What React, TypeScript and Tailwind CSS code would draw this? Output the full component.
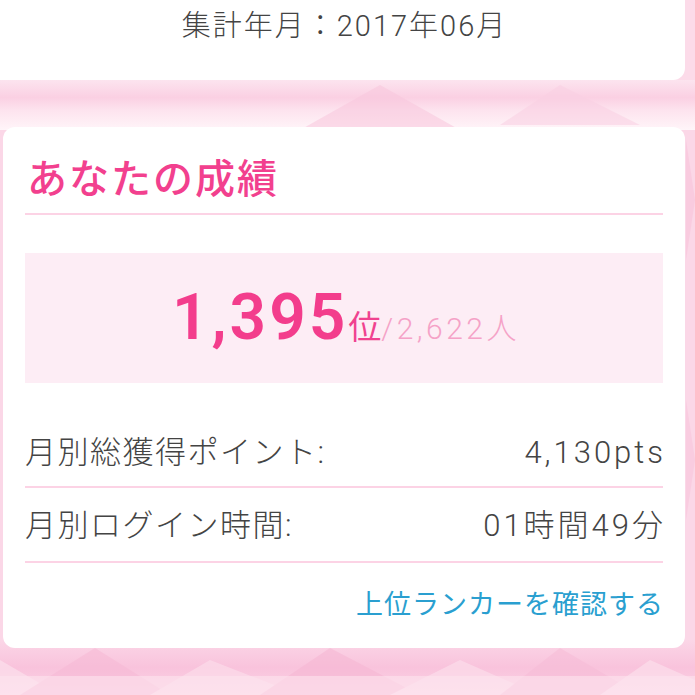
import React from "react";

const font = "font-['Roboto','Noto_Sans_CJK_JP',sans-serif]";

function Background() {
  return (
    <svg className="absolute inset-0" width="695" height="695" viewBox="0 0 695 695">
      <defs>
        <linearGradient id="band" x1="0" y1="0" x2="0" y2="1">
          <stop offset="0" stopColor="#fce4ef" />
          <stop offset="0.35" stopColor="#fbd0e3" />
          <stop offset="0.6" stopColor="#fde3ee" />
          <stop offset="1" stopColor="#fff5f9" />
        </linearGradient>
        <linearGradient id="bottom" x1="0" y1="0" x2="0" y2="1">
          <stop offset="0" stopColor="#fbd6e7" />
          <stop offset="0.5" stopColor="#f9c3dc" />
          <stop offset="1" stopColor="#fbd3e5" />
        </linearGradient>
      </defs>
      <rect x="0" y="0" width="695" height="695" fill="#fcdbe9" />
      <rect x="0" y="80" width="695" height="50" fill="url(#band)" />
      <rect x="0" y="130" width="695" height="520" fill="#fbd7e7" />
      <rect x="0" y="640" width="695" height="55" fill="url(#bottom)" />
      <g opacity="0.55">
        <polygon points="0,660 60,695 0,695" fill="#fde8f1" />
        <polygon points="95,648 170,695 20,695" fill="#f7b9d5" />
        <polygon points="210,660 300,695 150,695" fill="#fde3ee" />
        <polygon points="330,648 420,695 260,695" fill="#f6b6d3" />
        <polygon points="460,660 540,695 390,695" fill="#fde4ef" />
        <polygon points="560,648 640,695 500,695" fill="#f7bcd7" />
        <polygon points="650,660 695,680 695,695 600,695" fill="#fde6f0" />
        <polygon points="380,85 460,130 300,130" fill="#f9c7dd" />
        <polygon points="560,85 640,125 500,125" fill="#fad0e3" />
        <polygon points="686,140 695,200 686,260" fill="#f8c2da" />
        <polygon points="686,400 695,460 686,520" fill="#f8c4db" />
      </g>
      <rect x="0" y="676" width="695" height="19" fill="#fde4ef" opacity="0.6" />
    </svg>
  );
}

export default function App() {
  return (
    <div className={`relative w-[695px] h-[695px] overflow-hidden ${font}`}>
      <Background />
      <div className="relative flex flex-col">
        <div className="w-[685px] h-[80px] bg-white rounded-br-[12px] flex justify-center pt-[6px] pl-[4px]">
          <div className="text-[29px] leading-[40px] font-light text-[#444444] tracking-[2px]">集計年月：2017年06月</div>
        </div>
        <div className="ml-[3px] mt-[47px] w-[682px] h-[521px] bg-white rounded-[12px] px-[22px] flex flex-col">
          <div className="pt-[29px] h-[86px] text-[40px] leading-[48px] font-medium text-[#f2408e] pl-[2px] tracking-[2px]">
            あなたの成績
          </div>
          <div className="h-[2px] bg-[#fcd3e5]" />
          <div className="mt-[38px] h-[130px] bg-[#fdedf5] flex items-center justify-center">
            <div className="flex items-baseline pl-[4px]">
              <span className="text-[64px] leading-none font-semibold text-[#f33d8c] tracking-[3px]">1,395</span>
              <span className="text-[33px] leading-none text-[#f0428f]">位</span>
              <span className="text-[30px] leading-none font-light text-[#f5a2c7] tracking-[3.5px]">/2,622人</span>
            </div>
          </div>
          <div className="h-[103px] flex items-end justify-between pb-[13px] text-[31px] leading-[40px] font-light text-[#444444]">
            <span className="tracking-[1.5px]">月別総獲得ポイント:</span>
            <span className="tracking-[3px] -mr-[3px]">4,130pts</span>
          </div>
          <div className="h-[2px] bg-[#fcd3e5]" />
          <div className="h-[73px] flex items-center justify-between pt-[2px] text-[31px] leading-[40px] font-light text-[#444444]">
            <span className="tracking-[1.5px]">月別ログイン時間:</span>
            <span className="tracking-[3px] -mr-[3px]">01時間49分</span>
          </div>
          <div className="h-[2px] bg-[#fcd3e5]" />
          <div className="flex justify-end pt-[22px] text-[27px] leading-[40px] text-[#2a9fd0] tracking-[1px] -mr-[1px]">
            上位ランカーを確認する
          </div>
        </div>
      </div>
    </div>
  );
}
